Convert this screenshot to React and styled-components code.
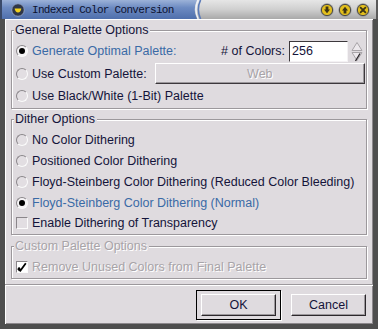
import React from 'react';
import styled, { createGlobalStyle } from 'styled-components';

const GlobalStyle = createGlobalStyle`
  body {
    margin: 0;
    background: #dfdbdf;
    font-family: "Liberation Sans", Arial, sans-serif;
  }
`;

const Window = styled.div`
  width: 378px;
  height: 329px;
  display: flex;
  flex-direction: column;
  background: #dfdbdf;
  overflow: hidden;
`;

const TitleBar = styled.div`
  height: 19px;
  display: flex;
  flex-shrink: 0;
`;

const TitleBlue = styled.div`
  width: 180px;
  display: flex;
  align-items: center;
  gap: 7px;
  padding-left: 9px;
  border-left: 2px solid #3a4a6a;
  background: linear-gradient(180deg, #9cb2d8 0%, #6d8bc2 40%, #4f6fac 100%);
`;

const TitleText = styled.span`
  font-family: "Liberation Mono", "DejaVu Sans Mono", monospace;
  font-size: 11px;
  letter-spacing: -0.7px;
  color: #0c1230;
  white-space: nowrap;
`;

const TitleGray = styled.div`
  flex: 1;
  display: flex;
  justify-content: flex-end;
  align-items: center;
  gap: 4px;
  padding-right: 6px;
  background: linear-gradient(180deg, #e6e6e6 0%, #cfcfcf 50%, #a9a9a9 100%);
  border-right: 2px solid #5a5a5a;
`;

const Body = styled.div`
  flex: 1;
  display: flex;
  flex-direction: column;
  padding: 11px 6px 0 6px;
  border: 5px solid #4e4e4e;
  border-top: 0;
  box-shadow: inset 1px 1px 0 #ffffff, inset -1px -1px 0 #8c888c;
`;

const Group = styled.div`
  display: flex;
  flex-direction: column;
  margin-top: ${p => p.$mt || 0}px;
  padding-bottom: 1px;
  border: 1px solid #9c989c;
  box-shadow: inset 1px 1px 0 #ffffff, 1px 1px 0 #ffffff;
`;

const Legend = styled.div`
  align-self: flex-start;
  margin: -8px 0 3px 2px;
  padding: 0 2px 0 1px;
  height: 14px;
  line-height: 14px;
  font-size: 12.5px;
  background: #dfdbdf;
  color: ${p => (p.$disabled ? '#a8a4a8' : '#14143a')};
  text-shadow: ${p => (p.$disabled ? '1px 1px 0 #ffffff' : 'none')};
`;

const Row = styled.div`
  display: flex;
  align-items: center;
  height: ${p => p.$h || 21}px;
  padding-left: 4px;
  gap: 4px;
`;

const Label = styled.span`
  font-size: 12.5px;
  white-space: nowrap;
  color: ${p => (p.$tone === 'active' ? '#3a6aa6' : p.$tone === 'disabled' ? '#a8a4a8' : '#14143a')};
  text-shadow: ${p => (p.$tone === 'disabled' ? '1px 1px 0 #ffffff' : 'none')};
`;

const Radio = styled.span`
  box-sizing: border-box;
  flex-shrink: 0;
  width: 12px;
  height: 12px;
  border-radius: 50%;
  border: 1px solid;
  border-color: #8a868a #fbfbfb #fbfbfb #8a868a;
  background: ${p => (p.$checked ? '#f6f4f6' : '#e2dee2')};
  display: flex;
  align-items: center;
  justify-content: center;

  &::after {
    content: '';
    width: 6px;
    height: 6px;
    border-radius: 50%;
    background: ${p => (p.$checked ? '#000000' : 'transparent')};
  }
`;

const CheckBox = styled.span`
  box-sizing: border-box;
  flex-shrink: 0;
  width: 12px;
  height: 12px;
  border: 1px solid;
  border-color: #8a868a #fbfbfb #fbfbfb #8a868a;
  background: ${p => (p.$checked ? '#ffffff' : '#e2dee2')};
  display: flex;
  align-items: center;
  justify-content: center;
`;

const Spacer = styled.span`
  flex: 1;
`;

const NumberBox = styled.div`
  box-sizing: border-box;
  width: 59px;
  height: 21px;
  padding-left: 2px;
  display: flex;
  align-items: center;
  background: #ffffff;
  border: 1px solid;
  border-color: #3c383c #f4f2f4 #f4f2f4 #3c383c;
  font-size: 12.5px;
  color: #14143a;
`;

const SpinBox = styled.svg`
  margin-right: 3px;
  margin-left: -1px;
`;

const WebButton = styled.div`
  box-sizing: border-box;
  width: 216px;
  height: 21px;
  margin-right: 1px;
  display: flex;
  align-items: center;
  justify-content: center;
  border: 1px solid;
  border-color: #ffffff #3c383c #3c383c #ffffff;
  box-shadow: inset -1px -1px 0 #9c989c;
  font-size: 12.5px;
  color: #a8a4a8;
  text-shadow: 1px 1px 0 #ffffff;
`;

const Separator = styled.div`
  margin: 5px -6px 0 -6px;
  border-top: 1px solid #9c989c;
  border-bottom: 1px solid #ffffff;
`;

const Footer = styled.div`
  display: flex;
  justify-content: flex-end;
  align-items: center;
  gap: 10px;
  padding: 4px 1px 0 0;
`;

const DefaultFrame = styled.div`
  padding: 3px 4px;
  border: 1px solid #000000;
  box-shadow: 1px 1px 0 #ffffff;
`;

const PushButton = styled.div`
  box-sizing: border-box;
  width: 75px;
  height: 22px;
  display: flex;
  align-items: center;
  justify-content: center;
  border: 1px solid;
  border-color: #ffffff #2c282c #2c282c #ffffff;
  box-shadow: inset -1px -1px 0 #9c989c;
  font-size: 12.5px;
  color: #14143a;
`;

const Swoosh = () => (
  <svg width="14" height="19" viewBox="0 0 14 19">
    <defs>
      <linearGradient id="gb" x1="0" y1="0" x2="0" y2="1">
        <stop offset="0" stopColor="#9cb2d8" />
        <stop offset="0.4" stopColor="#6d8bc2" />
        <stop offset="1" stopColor="#4f6fac" />
      </linearGradient>
      <linearGradient id="gg" x1="0" y1="0" x2="0" y2="1">
        <stop offset="0" stopColor="#e6e6e6" />
        <stop offset="0.5" stopColor="#cfcfcf" />
        <stop offset="1" stopColor="#a9a9a9" />
      </linearGradient>
    </defs>
    <rect width="14" height="19" fill="url(#gg)" />
    <path d="M0 0 H6 Q1.5 9.5 6 19 H0 Z" fill="url(#gb)" />
    <path d="M7.2 0 Q2.7 9.5 7.2 19" stroke="#eef2fa" strokeWidth="1.4" fill="none" />
    <path d="M9.6 0 Q5.1 9.5 9.6 19" stroke="#5a7ab8" strokeWidth="1.6" fill="none" />
  </svg>
);

const MenuIcon = () => (
  <svg width="14" height="14" viewBox="0 0 14 14">
    <circle cx="7" cy="7" r="6.3" fill="#2e3648" stroke="#8ea0c4" strokeWidth="1" />
    <path d="M3.6 5.6 H10.4 Q9.6 9.6 7 9.6 Q4.4 9.6 3.6 5.6 Z" fill="#f2d21e" />
  </svg>
);

const WinButton = ({ kind }) => (
  <svg width="14" height="14" viewBox="0 0 14 14">
    <circle cx="7" cy="7" r="6.7" fill="#9a9a9a" />
    <circle cx="7" cy="7" r="5.6" fill="#e3bf1c" stroke="#4a4a4a" strokeWidth="1" />
    {kind === 'down' && <path d="M5.6 3.6 H8.4 V6.6 H10 L7 10.2 L4 6.6 H5.6 Z" fill="#3c3414" />}
    {kind === 'up' && <path d="M5.6 10.4 H8.4 V7.4 H10 L7 3.8 L4 7.4 H5.6 Z" fill="#3c3414" />}
    {kind === 'close' && (
      <path d="M4.6 4.6 L9.4 9.4 M9.4 4.6 L4.6 9.4" stroke="#3c3414" strokeWidth="1.8" strokeLinecap="round" />
    )}
  </svg>
);

const Spinner = () => (
  <SpinBox width="12" height="21" viewBox="0 0 12 21">
    <path d="M6 1.5 L11 9.5 H1 Z" fill="#ece8ec" stroke="#a8a4a8" strokeWidth="1" />
    <path d="M1 11.5 H11 L6 19.5 Z" fill="#ece8ec" stroke="#a8a4a8" strokeWidth="1" />
    <path d="M4.5 20 L9 12.5" stroke="#2a262a" strokeWidth="1.3" />
  </SpinBox>
);

const CheckMark = () => (
  <svg width="10" height="10" viewBox="0 0 10 10">
    <path d="M1.5 5.5 L3.5 8.5 L8.8 1.2" stroke="#000000" strokeWidth="1.8" fill="none" />
    <path d="M1.2 6.2 L3.2 8.8" stroke="#000000" strokeWidth="2.6" />
  </svg>
);

const OptionRow = ({ checked, tone, h, children }) => (
  <Row $h={h}>
    <Radio $checked={checked} />
    <Label $tone={tone}>{children}</Label>
  </Row>
);

export default function App() {
  return (
    <>
      <GlobalStyle />
      <Window>
        <TitleBar>
          <TitleBlue>
            <MenuIcon />
            <TitleText>Indexed Color Conversion</TitleText>
          </TitleBlue>
          <Swoosh />
          <TitleGray>
            <WinButton kind="down" />
            <WinButton kind="up" />
            <WinButton kind="close" />
          </TitleGray>
        </TitleBar>

        <Body>
          <Group>
            <Legend>General Palette Options</Legend>
            <Row $h={22}>
              <Radio $checked />
              <Label $tone="active">Generate Optimal Palette:</Label>
              <Spacer />
              <Label>#&nbsp;of Colors:</Label>
              <NumberBox>256</NumberBox>
              <Spinner />
            </Row>
            <Row $h={23}>
              <Radio />
              <Label>Use Custom Palette:</Label>
              <Spacer />
              <WebButton>Web</WebButton>
            </Row>
            <OptionRow h={22}>Use Black/White (1-Bit) Palette</OptionRow>
          </Group>

          <Group $mt={10}>
            <Legend>Dither Options</Legend>
            <OptionRow>No Color Dithering</OptionRow>
            <OptionRow>Positioned Color Dithering</OptionRow>
            <OptionRow>Floyd-Steinberg Color Dithering (Reduced Color Bleeding)</OptionRow>
            <OptionRow checked tone="active">Floyd-Steinberg Color Dithering (Normal)</OptionRow>
            <Row $h={20}>
              <CheckBox />
              <Label>Enable Dithering of Transparency</Label>
            </Row>
          </Group>

          <Group $mt={11}>
            <Legend $disabled>Custom Palette Options</Legend>
            <Row $h={21}>
              <CheckBox $checked>
                <CheckMark />
              </CheckBox>
              <Label $tone="disabled">Remove Unused Colors from Final Palette</Label>
            </Row>
          </Group>

          <Separator />

          <Footer>
            <DefaultFrame>
              <PushButton>OK</PushButton>
            </DefaultFrame>
            <PushButton>Cancel</PushButton>
          </Footer>
        </Body>
      </Window>
    </>
  );
}
